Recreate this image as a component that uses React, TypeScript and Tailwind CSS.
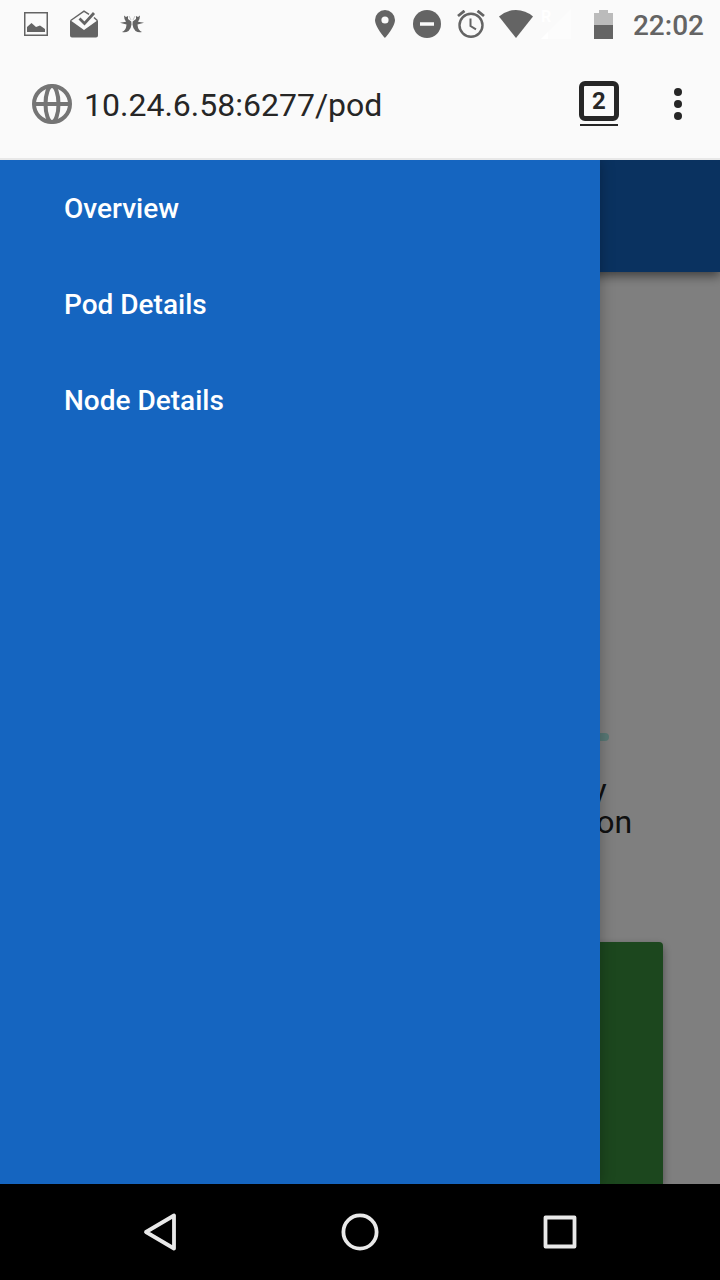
import React from "react";

function StatusBar() {
  return (
    <header className="flex h-12 items-center justify-between bg-[#fafafa] pl-6 pr-4 text-[#646464]">
      <div className="flex items-center">
        <svg width="24" height="24" viewBox="0 0 24 24" fill="none" aria-label="Screenshot saved">
          <rect x="0.75" y="0.75" width="22.5" height="22.5" stroke="currentColor" strokeWidth="1.5" />
          <path d="M3 20V15L7.5 11L12 15L16 13.5L21 17V20Z" fill="currentColor" />
        </svg>
        <svg className="ml-[22px]" width="28" height="28" viewBox="0 0 28 28" fill="none" aria-label="Inbox">
          <path d="M0 10L14 20L28 10V25.500Q28 27.500 26 27.500H2Q0 27.500 0 25.500Z" fill="currentColor" />
          <path d="M0.700 10.500L14 1.200L19 4.400M24 7.500L27.300 10.500" stroke="currentColor" strokeWidth="1.500" />
          <path d="M9.500 8.500L14.500 13.500L24 3" stroke="currentColor" strokeWidth="2.800" />
        </svg>
        <svg className="ml-[22px]" width="24" height="22" viewBox="-1 0 24 22" fill="currentColor" aria-label="Notification">
          <path d="M3 2.500L5 4L7 3V6L10.300 8.500L10.500 11.500Q10 16 7.500 18Q4.500 20 1 19Q5 17 5.300 13L5.500 11.500L-1 9.800L5 8.800L3.500 6Z" />
          <path d="M19 2.500L17 4L15 3V6L11.700 8.500L11.500 11.500Q12 16 14.500 18Q17.500 20 21 19Q17 17 16.700 13L16.500 11.500L23 9.800L17 8.800L18.500 6Z" />
          <path d="M8 3L10 7M14 3L12 7" stroke="currentColor" strokeOpacity="0.35" />
        </svg>
      </div>
      <div className="flex items-center">
        <svg width="20" height="28" viewBox="0 0 20 28" fill="currentColor" aria-label="Location">
          <path fillRule="evenodd" d="M10 0A10 10 0 0 0 0 10C0 17 10 28 10 28S20 17 20 10A10 10 0 0 0 10 0ZM10 6.400A3.600 3.600 0 1 1 10 13.600A3.600 3.600 0 1 1 10 6.400Z" />
        </svg>
        <svg className="ml-[18px]" width="28" height="28" viewBox="0 0 28 28" aria-label="Do not disturb">
          <circle cx="14" cy="14" r="14" fill="currentColor" />
          <path d="M7 14H21" stroke="#fafafa" strokeWidth="3.500" />
        </svg>
        <svg className="ml-4" width="28" height="28" viewBox="0 0 28 28" fill="none" stroke="currentColor" aria-label="Alarm">
          <circle cx="14" cy="15.300" r="11.500" strokeWidth="2.400" />
          <path d="M1 6L7.500 0.800M27 6L20.500 0.800" strokeWidth="2.800" />
          <path d="M13.500 8.500V16L19 19.300" strokeWidth="2" />
        </svg>
        <svg className="ml-3.5" width="34" height="28" viewBox="0 0 34 28" fill="currentColor" aria-label="Wi-Fi">
          <path d="M0 6.500Q7.500 0 17 0T34 6.500L17 28Z" />
        </svg>
        <span className="relative ml-2 block h-[30px] w-[30px] text-white">
          <svg width="30" height="30" viewBox="0 0 30 30" fill="currentColor" aria-label="Signal">
            <path d="M30 0V30H0Z" fillOpacity="0.35" />
            <path d="M7 23V30H0Z" />
          </svg>
          <span className="absolute left-0 top-0 text-base leading-4 font-bold">R</span>
        </span>
        <svg className="ml-[23px]" width="19" height="29" viewBox="0 0 19 29" fill="currentColor" aria-label="Battery">
          <path d="M0 3H5V0H14V3H19V15H0Z" fillOpacity="0.42" />
          <path d="M0 15H19V29H0Z" />
        </svg>
        <time className="ml-5 pt-1 text-[28px] leading-8 font-medium">22:02</time>
      </div>
    </header>
  );
}

function AddressBar() {
  return (
    <div className="flex h-28 items-center border-b-2 border-[#e8e8e8] bg-[#fafafa] pt-0.5 pl-8 pr-[23px] text-[#262626]">
      <svg width="40" height="40" viewBox="0 0 40 40" fill="none" stroke="#757575" strokeWidth="4" className="shrink-0" aria-hidden="true">
        <circle cx="20" cy="20" r="18" />
        <ellipse cx="20" cy="20" rx="6.500" ry="18" />
        <path d="M2 20H38" />
      </svg>
      <input
        type="text"
        aria-label="Address"
        defaultValue="10.24.6.58:6277/pod"
        className="ml-3 h-12 min-w-0 flex-1 bg-transparent pt-0.5 text-[32px] leading-10 outline-none"
      />
      <button type="button" aria-label="Open tabs" className="flex flex-col items-center gap-[3px] pb-0.5">
        <span className="flex h-10 w-10 items-center justify-center rounded-md border-5 border-current text-2xl leading-6 font-bold">
          2
        </span>
        <span className="h-0.5 w-[38px] bg-current" />
      </button>
      <button type="button" aria-label="Menu" className="ml-10 flex h-12 w-[38px] items-center justify-center">
        <svg width="8" height="32" viewBox="0 0 8 32" fill="currentColor">
          <circle cx="4" cy="4" r="4" />
          <circle cx="4" cy="16" r="4" />
          <circle cx="4" cy="28" r="4" />
        </svg>
      </button>
    </div>
  );
}

function Dashboard() {
  return (
    <div className="flex flex-1 flex-col bg-white">
      <div className="h-28 shrink-0 bg-[#1565c0] shadow-[0_4px_10px_rgba(0,0,0,0.5)]" />
      <div className="flex flex-1 flex-col px-[57px]">
        <section className="mt-[461px] mr-1.5 ml-auto flex w-[218px] flex-col items-center">
          <span className="h-2 w-[122px] rounded-full bg-[#b0f0ea]" />
          <p className="mt-[33px] w-[180px] text-center text-[32px] leading-8 text-[#212121]">Memory Reservation</p>
        </section>
        <section className="mt-[104px] flex-1 rounded-t bg-[#388e3c] shadow-[0_4px_10px_rgba(0,0,0,0.4)]" />
      </div>
    </div>
  );
}

const links = [
  { label: "Overview", href: "#overview" },
  { label: "Pod Details", href: "#pod" },
  { label: "Node Details", href: "#node" },
];

function Drawer() {
  return (
    <nav className="absolute inset-y-0 left-0 w-5/6 bg-[#1565c0] shadow-[0_0_14px_rgba(0,0,0,0.3)]">
      <ul>
        {links.map((link) => (
          <li key={link.label}>
            <a href={link.href} className="flex h-24 items-center px-16 pt-0.5 text-[28px] leading-8 font-medium text-white">
              {link.label}
            </a>
          </li>
        ))}
      </ul>
    </nav>
  );
}

function SystemNav() {
  return (
    <footer className="flex h-24 items-center justify-center gap-[152px] bg-black text-[#e9e9e9]">
      <button type="button" aria-label="Back">
        <svg width="48" height="48" viewBox="0 0 48 48" fill="none" stroke="currentColor" strokeWidth="3.800" strokeLinejoin="round">
          <path d="M10 24L38 7.500V40.500Z" />
        </svg>
      </button>
      <button type="button" aria-label="Home">
        <svg width="48" height="48" viewBox="0 0 48 48" fill="none" stroke="currentColor" strokeWidth="3.800">
          <circle cx="24" cy="24" r="16.600" />
        </svg>
      </button>
      <button type="button" aria-label="Recent apps">
        <svg width="48" height="48" viewBox="0 0 48 48" fill="none" stroke="currentColor" strokeWidth="3.800" strokeLinejoin="round">
          <rect x="9.500" y="9.500" width="29" height="29" />
        </svg>
      </button>
    </footer>
  );
}

export default function App() {
  return (
    <div className="flex min-h-screen flex-col font-['Roboto',sans-serif]">
      <StatusBar />
      <AddressBar />
      <main className="relative flex flex-1 flex-col overflow-hidden">
        <Dashboard />
        <div className="absolute inset-0 bg-black/50" />
        <Drawer />
      </main>
      <SystemNav />
    </div>
  );
}
